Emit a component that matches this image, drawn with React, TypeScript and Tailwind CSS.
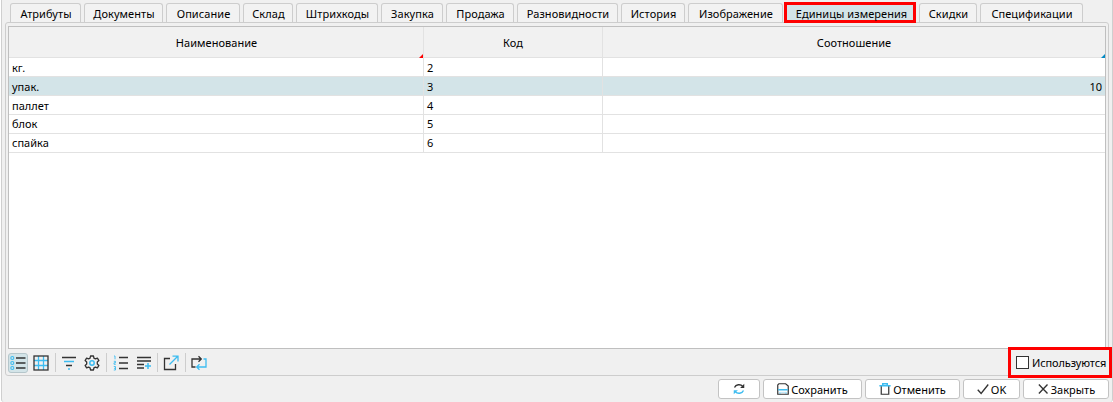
import React from "react";

type Tab = { label: string; width: string; active?: boolean };

const tabs: Tab[] = [
  { label: "Атрибуты", width: "w-[71px]" },
  { label: "Документы", width: "w-[79px]" },
  { label: "Описание", width: "w-[74px]" },
  { label: "Склад", width: "w-[50px]" },
  { label: "Штрихкоды", width: "w-[82px]" },
  { label: "Закупка", width: "w-[62px]" },
  { label: "Продажа", width: "w-[68px]" },
  { label: "Разновидности", width: "w-[101px]" },
  { label: "История", width: "w-[64px]" },
  { label: "Изображение", width: "w-[95px]" },
  { label: "Единицы измерения", width: "w-[132px]", active: true },
  { label: "Скидки", width: "w-[58px]" },
  { label: "Спецификации", width: "w-[103px]" },
];

const rows = [
  { name: "кг.", code: "2", ratio: "", leading: "leading-[19px]" },
  { name: "упак.", code: "3", ratio: "10", leading: "leading-[19px]" },
  { name: "паллет", code: "4", ratio: "", leading: "leading-[19px]" },
  { name: "блок", code: "5", ratio: "", leading: "leading-[17px]" },
  { name: "спайка", code: "6", ratio: "", leading: "leading-[17px]" },
];

const dark = "#333333";
const blue = "#3dbcf0";

function Icon({ children, size = 16 }: { children: React.ReactNode; size?: number }) {
  return (
    <svg width={size} height={size} viewBox="0 0 16 16" fill="none" stroke={dark} strokeWidth="1.3" className="shrink-0">
      {children}
    </svg>
  );
}

function ListIcon() {
  return (
    <Icon>
      <path d="M6 3H15.500M6 8H15.500M6 13H15.500" strokeWidth="1.6" />
      <g stroke={blue} strokeWidth="1.1">
        <circle cx="2.300" cy="3" r="1.500" />
        <circle cx="2.300" cy="8" r="1.500" />
        <circle cx="2.300" cy="13" r="1.500" />
      </g>
    </Icon>
  );
}

function GridIcon() {
  return (
    <Icon>
      <path d="M5.500 1V15M10.500 1V15M1 5.500H15M1 10.500H15" stroke={blue} />
      <rect x="1" y="1" width="14" height="14" />
    </Icon>
  );
}

function FilterIcon() {
  return (
    <Icon>
      <path d="M1 2.500H15M5 10.500H11" strokeWidth="1.500" />
      <path d="M3 6.500H13M7 14H9" stroke={blue} strokeWidth="1.500" />
    </Icon>
  );
}

function GearIcon() {
  return (
    <Icon>
      <path strokeLinejoin="round" d="M6.500 1h3l.4 2.100 1.500.8 2-.8 1.500 2.500-1.600 1.400v2l1.600 1.400-1.500 2.500-2-.8-1.500.8-.4 2.100h-3l-.4-2.100-1.500-.8-2 .8-1.500-2.500L2.700 9V7L1.100 5.600l1.500-2.500 2 .8 1.500-.8z" />
      <circle cx="8" cy="8" r="2.200" stroke={blue} strokeWidth="1.500" />
    </Icon>
  );
}

function NumberedIcon() {
  return (
    <Icon>
      <path d="M6 2.500H15M6 8H15M6 13.500H15" strokeWidth="1.600" />
      <path d="M1 1H2V4.300M.8 6.300H2.500V7.800H1V9.300H2.800M.8 11.500H2.500V15H.8M1 13.300H2.500" stroke={blue} strokeWidth=".9" />
    </Icon>
  );
}

function AddRowsIcon() {
  return (
    <Icon>
      <path d="M1 2.500H15M1 6H15M1 9.500H8M1 13H8" strokeWidth="1.400" />
      <path d="M12 8V14M9 11H15" stroke={blue} strokeWidth="1.500" />
    </Icon>
  );
}

function OpenIcon() {
  return (
    <Icon>
      <path d="M7 3.500H1.500V14.500H12.500V9" />
      <path d="M6.500 9.500L14.500 1.500M9.500 1.200H15V6.500" stroke={blue} />
    </Icon>
  );
}

function SwapIcon() {
  return (
    <Icon>
      <path d="M4.500 12H1V4H10M7.500 1.200L10.300 4L7.500 6.800" />
      <path d="M12.500 4H15V12H6M8.500 9.200L5.700 12L8.500 14.800" stroke={blue} />
    </Icon>
  );
}

function RefreshIcon() {
  return (
    <Icon size={12}>
      <path d="M2 6A6.300 5.500 0 0 1 13 4.500" strokeWidth="1.800" />
      <path d="M15 1V6.500H9.500Z" fill={dark} stroke="none" />
      <path d="M14 10A6.300 5.500 0 0 1 3 11.500" stroke={blue} strokeWidth="1.800" />
      <path d="M1 15V9.500H6.500Z" fill={blue} stroke="none" />
    </Icon>
  );
}

function SaveIcon() {
  return (
    <Icon size={12}>
      <path d="M2.500 1H11.500L15 4V15H1V2.500Z" strokeWidth="1.600" />
      <path d="M1.500 9H14.500M4 14V12.500M12 14V12.500" stroke={blue} strokeWidth="2" />
      <path d="M3.500 12.500H12.500" stroke="#b9e4f6" />
    </Icon>
  );
}

function TrashIcon() {
  return (
    <Icon size={12}>
      <path d="M3 4V15H13V4" strokeWidth="1.600" />
      <path d="M.5 3.500H15.500M5 3V1H11V3" stroke={blue} strokeWidth="2" />
    </Icon>
  );
}

function CheckIcon() {
  return (
    <Icon size={12}>
      <path d="M1 9L5.500 14L15 2" strokeWidth="1.800" />
    </Icon>
  );
}

function CloseIcon() {
  return (
    <Icon size={12}>
      <path d="M2.500 2L14 14M14 2L2.500 14" strokeWidth="1.800" />
    </Icon>
  );
}

function Separator() {
  return <div className="h-[19px] w-px bg-[#cdcdcd]" />;
}

function ActionButton({ width, icon, label }: { width: string; icon: React.ReactNode; label?: string }) {
  return (
    <button className={`${width} flex h-5 shrink-0 items-center justify-center gap-[2px] rounded-[3px] border border-[#c3c3c3] bg-white`}>
      {icon}
      {label && <span>{label}</span>}
    </button>
  );
}

export default function App() {
  return (
    <div className="ml-px flex h-[402px] w-[1112px] flex-col overflow-hidden rounded-b-[3px] border-x border-[#cfcfcf] bg-[#f0f0f0] pl-[3px] pr-[3px] font-['Noto_Sans','Open_Sans',sans-serif] text-[11px] leading-[15px] text-black">
      <div className="flex h-[22px] shrink-0 items-end gap-[3px] pl-[5px]">
        {tabs.map((t) =>
          t.active ? (
            <div key={t.label} className={`${t.width} relative z-10 -mb-px -ml-[2px] flex h-[21px] shrink-0 items-center justify-center border-[3px] border-[#fe0000] bg-[#d3e4e8] pl-[3px] pt-[2px]`}>
              <span className="whitespace-nowrap tracking-[0.06px]">{t.label}</span>
            </div>
          ) : (
            <div key={t.label} className={`${t.width} flex h-[19px] shrink-0 items-center justify-center rounded-t-[3px] border border-b-0 border-[#cdcdcd] bg-[#f2f2f2] pl-px pt-px`}>
              <span className="whitespace-nowrap tracking-[0.07px]">{t.label}</span>
            </div>
          ),
        )}
      </div>

      <div className="flex h-[354px] shrink-0 flex-col rounded-[3px] border border-[#cdcdcd] px-[2px] pt-[3px]">
        <div className="h-[323px] shrink-0 border border-[#bfbfbf] bg-white">
          <div className="grid h-[31px] grid-cols-[415px_179px_1fr] border-b border-[#e2e2e2] bg-[#f1f1f1] text-center leading-[31px] tracking-[0.04px]">
            <div className="relative border-r border-[#e2e2e2] pl-px">
              Наименование
              <div className="absolute bottom-0 right-0 border-b-4 border-l-4 border-b-[#fe0000] border-l-transparent" />
            </div>
            <div className="border-r border-[#e2e2e2]">Код</div>
            <div className="relative">
              Соотношение
              <div className="absolute bottom-0 right-0 border-b-4 border-l-4 border-b-[#008ac5] border-l-transparent" />
            </div>
          </div>
          {rows.map((r) => (
            <div key={r.code} className={`grid h-[19px] grid-cols-[415px_179px_1fr] border-b border-[#e2e2e2] ${r.leading} ${r.ratio ? "bg-[#d3e4e8]" : ""}`}>
              <div className="border-r border-[#e2e2e2] pl-[3px]">{r.name}</div>
              <div className="border-r border-[#e2e2e2] pl-[3px]">{r.code}</div>
              <div className="pr-[3px] text-right">{r.ratio}</div>
            </div>
          ))}
        </div>
        <div className="flex h-[27px] items-center">
          <div className="flex h-5 w-5 items-center justify-center rounded-[3px] border border-[#b5c6cb] bg-[#d3e4e8]"><ListIcon /></div>
          <div className="ml-[5px] flex"><GridIcon /></div>
          <div className="ml-[6px]"><Separator /></div>
          <div className="ml-[5px] flex"><FilterIcon /></div>
          <div className="ml-[7px] flex"><GearIcon /></div>
          <div className="ml-[6px]"><Separator /></div>
          <div className="ml-[6px] flex"><NumberedIcon /></div>
          <div className="ml-[7px] flex"><AddRowsIcon /></div>
          <div className="ml-[5px]"><Separator /></div>
          <div className="ml-[5px] flex"><OpenIcon /></div>
          <div className="ml-[6px]"><Separator /></div>
          <div className="ml-[5px] flex"><SwapIcon /></div>
          <div className="relative -mr-[6px] ml-auto flex h-[31px] w-[104px] shrink-0 items-center border-[3px] border-[#fe0000] bg-[#f0f0f0] pl-[5px]">
            <div className="h-[13px] w-[13px] shrink-0 border border-[#333] bg-white" />
            <span className="ml-[3px] tracking-[-0.12px]">Используются</span>
          </div>
        </div>
      </div>

      <div className="mt-[3px] flex justify-end gap-[3px]">
        <ActionButton width="w-[42px]" icon={<RefreshIcon />} />
        <ActionButton width="w-[99px]" icon={<SaveIcon />} label="Сохранить" />
        <ActionButton width="w-[95px]" icon={<TrashIcon />} label="Отменить" />
        <ActionButton width="w-[57px]" icon={<CheckIcon />} label="OK" />
        <ActionButton width="w-[86px]" icon={<CloseIcon />} label="Закрыть" />
      </div>
    </div>
  );
}
